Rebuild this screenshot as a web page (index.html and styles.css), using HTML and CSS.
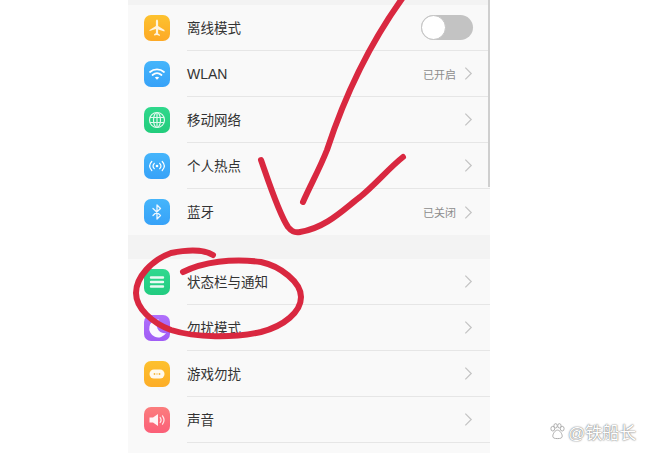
FILE: index.html
```html
<!DOCTYPE html>
<html lang="zh">
<head>
  <meta charset="UTF-8" />
  <title>设置</title>
  <link rel="stylesheet" href="styles.css">
</head>
<body>
  <div class="screen">
    <div class="top-gap"></div>
    <div class="group">
      <div class="row">
        <span class="icon orange"><svg viewBox="0 0 26 26"><path d="M13 4.500c.8 0 1.100 1.200 1.100 2.600v3.900l6.400 4v1.500l-6.400-2v4l1.800 1.300v1.200L13 20l-2.900.5v-1.200l1.800-1.300v-4l-6.400 2V15l6.400-4V7.100c0-1.400.3-2.600 1.100-2.600z" fill="#fff" opacity=".85"/></svg></span>
        <div class="row-main">
          <span class="label">离线模式</span>
          <span class="switch"><span class="knob"></span></span>
        </div>
      </div>
      <div class="row">
        <span class="icon blue"><svg viewBox="0 0 26 26"><g fill="none" stroke="#fff" stroke-width="1.700" stroke-linecap="round"><path d="M6 11c4-3.600 10-3.600 14 0"/><path d="M8.500 14c2.700-2.300 6.300-2.300 9 0"/></g><path d="M10.800 16.500c1.300-1 3.100-1 4.400 0L13 18.800z" fill="#fff"/></svg></span>
        <div class="row-main">
          <span class="label latin">WLAN</span>
          <span class="status">已开启</span>
          <svg class="chevron" viewBox="0 0 10 16"><path d="M1.500 1.500L8 8l-6.500 6.500"/></svg>
        </div>
      </div>
      <div class="row">
        <span class="icon green"><svg viewBox="0 0 26 26"><g fill="none" stroke="#fff" stroke-width="1.200" opacity=".85"><circle cx="13" cy="13" r="7.500"/><ellipse cx="13" cy="13" rx="3.500" ry="7.500"/><path d="M13 5.500v15M6 10.500h14M6 15.500h14"/></g></svg></span>
        <div class="row-main">
          <span class="label">移动网络</span>
          <svg class="chevron" viewBox="0 0 10 16"><path d="M1.500 1.500L8 8l-6.500 6.500"/></svg>
        </div>
      </div>
      <div class="row">
        <span class="icon blue"><svg viewBox="0 0 26 26"><circle cx="13" cy="13" r="1.300" fill="#fff"/><g fill="none" stroke="#fff" stroke-width="1.200" stroke-linecap="round"><path d="M10.300 10.300c-1.400 1.500-1.400 3.900 0 5.400M15.700 10.300c1.400 1.500 1.400 3.900 0 5.400"/><path d="M7.800 8.500c-2.600 2.700-2.600 6.300 0 9M18.200 8.500c2.600 2.700 2.600 6.300 0 9"/></g></svg></span>
        <div class="row-main">
          <span class="label">个人热点</span>
          <svg class="chevron" viewBox="0 0 10 16"><path d="M1.500 1.500L8 8l-6.500 6.500"/></svg>
        </div>
      </div>
      <div class="row">
        <span class="icon blue"><svg viewBox="0 0 26 26"><path d="M9 9.500l7.500 7L13 20V6l3.500 3.500-7.500 7" fill="none" stroke="#fff" stroke-width="1.300" stroke-linejoin="round" stroke-linecap="round" opacity=".9"/></svg></span>
        <div class="row-main no-line">
          <span class="label">蓝牙</span>
          <span class="status">已关闭</span>
          <svg class="chevron" viewBox="0 0 10 16"><path d="M1.500 1.500L8 8l-6.500 6.500"/></svg>
        </div>
      </div>
    </div>
    <div class="gap"></div>
    <div class="group">
      <div class="row">
        <span class="icon teal"><svg viewBox="0 0 26 26"><g stroke="#fff" stroke-width="2.400" stroke-linecap="round" opacity=".9"><path d="M7 8.500h12M7 13h12M7 17.500h12"/></g></svg></span>
        <div class="row-main">
          <span class="label">状态栏与通知</span>
          <svg class="chevron" viewBox="0 0 10 16"><path d="M1.500 1.500L8 8l-6.500 6.500"/></svg>
        </div>
      </div>
      <div class="row">
        <span class="icon purple"><svg viewBox="0 0 26 26"><path d="M15 4.500a9 9 0 1 0 7 13.500 8 8 0 0 1-7-13.500z" fill="#fff" opacity=".95"/></svg></span>
        <div class="row-main">
          <span class="label">勿扰模式</span>
          <svg class="chevron" viewBox="0 0 10 16"><path d="M1.500 1.500L8 8l-6.500 6.500"/></svg>
        </div>
      </div>
      <div class="row">
        <span class="icon amber"><svg viewBox="0 0 26 26"><rect x="5.500" y="8.500" width="15" height="9" rx="4.500" fill="#fff" opacity=".92"/><circle cx="10.500" cy="13" r=".9" fill="#f5b63e"/><circle cx="15.500" cy="13" r=".9" fill="#f5b63e"/><path d="M12 13h2" stroke="#f5b63e" stroke-width=".7"/></svg></span>
        <div class="row-main">
          <span class="label">游戏勿扰</span>
          <svg class="chevron" viewBox="0 0 10 16"><path d="M1.500 1.500L8 8l-6.500 6.500"/></svg>
        </div>
      </div>
      <div class="row">
        <span class="icon red"><svg viewBox="0 0 26 26"><path d="M5.500 10.500h3.500l5-3.500v12l-5-3.500H5.500z" fill="#fff" opacity=".92"/><path d="M16.200 10.500c1.100 1.500 1.100 3.500 0 5M18.500 8.800c1.900 2.600 1.900 5.800 0 8.400" fill="none" stroke="#fff" stroke-width="1.200" stroke-linecap="round" opacity=".85"/></svg></span>
        <div class="row-main">
          <span class="label">声音</span>
          <svg class="chevron" viewBox="0 0 10 16"><path d="M1.500 1.500L8 8l-6.500 6.500"/></svg>
        </div>
      </div>
      <div class="row"></div>
    </div>
    <div class="scrollbar"></div>
  </div>

  <svg class="scribble" viewBox="0 0 650 453">
    <path d="M404 -4C372 40 345 95 327 150C319 170 311 184 303 202"/>
    <path d="M261 160C268 180 279 214 288 227C292 232 296 233 300 232C326 228 344 209 360 197C375 185 389 168 403 157"/>
    <path d="M183 272C203 262 232 258 261 262C280 266 301 282 301 297C301 312 284 326 261 332C234 338 196 338 171 330C152 323 136 308 136 293C136 277 152 260 171 253C186 250 203 249 213 255"/>
  </svg>

  <div class="watermark">
    <svg class="paw" viewBox="0 0 18 18"><g fill="#fff" stroke="#a9a9a9" stroke-width="1"><ellipse cx="4" cy="6" rx="2" ry="2.500"/><ellipse cx="14" cy="6" rx="2" ry="2.500"/><ellipse cx="7" cy="3" rx="1.800" ry="2.300"/><ellipse cx="11" cy="3" rx="1.800" ry="2.300"/><path d="M9 7.500c2.500 0 5 4 5 6.500 0 2-2 2.500-5 2.500s-5-.5-5-2.500c0-2.500 2.500-6.500 5-6.500z"/></g></svg>
    <span>@铁船长</span>
  </div>
</body>
</html>
```

FILE: styles.css
```css
html, body {
  height: 100%;
}
body {
  margin: 0;
  background: #fff;
  font-family: "Liberation Sans", "Noto Sans CJK SC", sans-serif;
  overflow: hidden;
}
.screen {
  position: relative;
  width: 362px;
  height: 453px;
  margin-left: 128px;
  background: #f3f3f3;
  overflow: hidden;
}
.top-gap {
  height: 5px;
}
.gap {
  height: 24px;
}
.group {
  background: #f9f9f9;
}
.row {
  display: flex;
  align-items: center;
  height: 46px;
  padding-left: 16px;
}
.icon {
  flex: none;
  width: 26px;
  height: 26px;
  margin-right: 17px;
  border-radius: 7px;
}
.icon svg {
  display: block;
  width: 26px;
  height: 26px;
}
.orange { background: linear-gradient(#fdc22f, #fda926); }
.blue { background: linear-gradient(#45b5fb, #37a2f8); }
.green { background: linear-gradient(#2fd88c, #22cc7c); }
.teal { background: linear-gradient(#2fd98f, #22cb80); }
.purple { background: linear-gradient(#b070fb, #a05cf5); }
.amber { background: linear-gradient(#fdc12e, #fdad28); }
.red { background: linear-gradient(#fb7d7d, #fb5f78); }
.row-main {
  flex: 1;
  display: flex;
  align-items: center;
  height: 100%;
  padding-right: 17px;
  border-bottom: 1px solid #e6e6e6;
  box-sizing: border-box;
}
.no-line {
  border-bottom: none;
}
.label {
  flex: 1;
  margin-top: -2px;
  font-size: 13.500px;
  color: #333;
}
.latin {
  margin-top: 1px;
  font-size: 14px;
}
.status {
  margin-right: 8px;
  font-size: 11px;
  color: #8c8c8c;
}
.chevron {
  width: 9px;
  height: 15px;
  fill: none;
  stroke: #c4c4c4;
  stroke-width: 1.400;
}
.switch {
  display: flex;
  width: 52px;
  height: 25px;
  border-radius: 13px;
  background: #c3c3c3;
}
.knob {
  width: 23px;
  height: 23px;
  border: 1px solid #c3c3c3;
  border-radius: 50%;
  background: #fff;
}
.scrollbar {
  position: absolute;
  top: 0;
  right: 0;
  width: 2px;
  height: 187px;
  background: #cfcfcf;
}
.scribble {
  position: absolute;
  top: 0;
  left: 0;
  width: 650px;
  height: 453px;
  fill: none;
  stroke: #d92840;
  stroke-width: 6;
  stroke-linecap: round;
  stroke-linejoin: round;
}
.watermark {
  position: absolute;
  top: 419px;
  left: 549px;
  display: flex;
  align-items: center;
  gap: 2px;
  font-size: 17px;
  color: #fff;
  text-shadow: 0 0 1px #777, 0 0 2px #8a8a8a;
}
.paw {
  width: 17px;
  height: 17px;
}
```
